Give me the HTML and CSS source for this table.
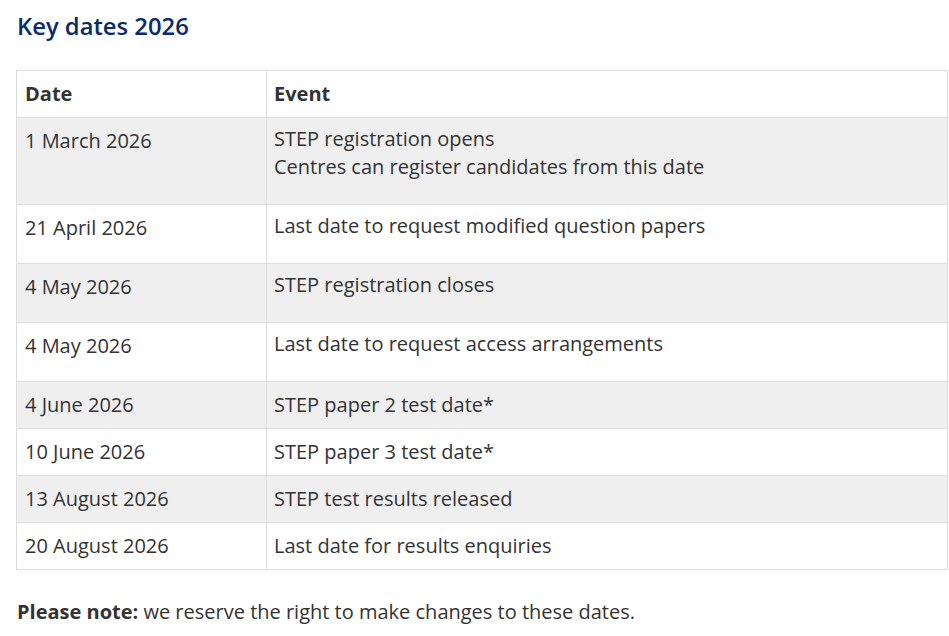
FILE: index.html
```html
<!DOCTYPE html>
<html lang="en">
<head>
<meta charset="utf-8">
<title>Key dates 2026</title>
<link rel="stylesheet" href="styles.css">
</head>
<body>
<main class="content">
  <h2 class="title">Key dates 2026</h2>
  <table class="dates">
    <thead>
      <tr><th class="col-date">Date</th><th class="col-event">Event</th></tr>
    </thead>
    <tbody>
      <tr><td>1 March 2026</td><td class="col-event"><p>STEP registration opens<br>Centres can register candidates from this date</p></td></tr>
      <tr><td>21 April 2026</td><td class="col-event"><p>Last date to request modified question papers</p></td></tr>
      <tr><td>4 May 2026</td><td class="col-event"><p>STEP registration closes</p></td></tr>
      <tr><td>4 May 2026</td><td class="col-event"><p>Last date to request access arrangements</p></td></tr>
      <tr><td>4 June 2026</td><td class="col-event">STEP paper 2 test date*</td></tr>
      <tr><td>10 June 2026</td><td class="col-event">STEP paper 3 test date*</td></tr>
      <tr><td>13 August 2026</td><td class="col-event">STEP test results released</td></tr>
      <tr><td>20 August 2026</td><td class="col-event">Last date for results enquiries</td></tr>
    </tbody>
  </table>
  <p class="note"><strong>Please note:</strong> we reserve the right to make changes to these dates.</p>
</main>
</body>
</html>
```

FILE: styles.css
```css
html, body {
  margin: 0;
  padding: 0;
  background: #fff;
}
body {
  font-family: "Open Sans", "Noto Sans", sans-serif;
  color: #333;
  font-size: 20px;
  line-height: 28px;
}
.content {
  padding: 0 0 0 16px;
}
.title {
  margin: 10px 0 28px 1px;
  font-size: 23.8px;
  line-height: 32px;
  font-weight: 600;
  color: #0b2b69;
}
.dates {
  border-collapse: collapse;
  width: 932px;
}
.dates th,
.dates td {
  border: 1px solid #ddd;
  padding: 9px 8px 9px 8px;
  text-align: left;
  vertical-align: top;
}
.dates .col-event {
  padding-left: 7px;
}
.dates th {
  font-weight: 700;
}
.dates .col-date {
  width: 233px;
}
.dates tbody tr:nth-child(odd) {
  background: #efefef;
}
.dates td p {
  margin: -2px 0 14px;
}
.note {
  margin: 28px 0 0 1px;
}
```
